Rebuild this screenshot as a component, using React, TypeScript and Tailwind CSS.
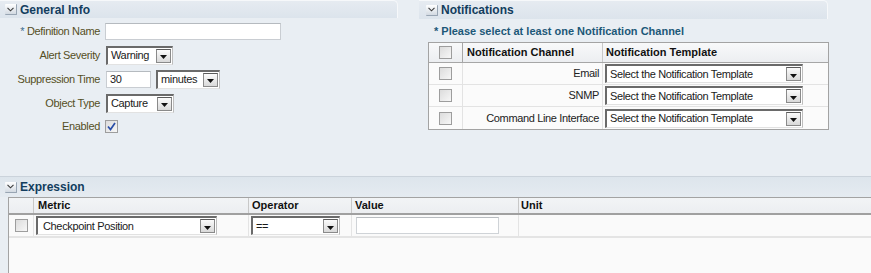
import React from 'react';

const Disclose = () => (
  <span className="flex items-center justify-center w-[12px] h-[11px] bg-linear-to-b from-white to-[#d3dae2] border-b border-r border-[#98a5b3] rounded-[1px]">
    <svg width="7" height="5" viewBox="0 0 7 5">
      <path d="M0.5 0.8 L3.5 3.8 L6.5 0.8" fill="none" stroke="#3b3b3b" strokeWidth="1.1" />
    </svg>
  </span>
);

const DropBtn = () => (
  <span className="flex items-center justify-center w-[15px] h-[14px] mr-[1px] border border-[#8a8a8a] border-t-[#5a5a5a] bg-linear-to-b from-[#fbfbfb] to-[#d9d9d9]">
    <svg width="7" height="4" viewBox="0 0 7 4" className="mt-[3px]">
      <polygon points="0,0 7,0 3.5,4" fill="#111" />
    </svg>
  </span>
);

const Select = ({ text, className }: { text: string; className: string }) => (
  <div
    className={
      'flex items-center justify-between h-[19px] bg-white border-t-2 border-l-2 border-[#6a6a6a] border-r border-b border-r-[#bdbdbd] border-b-[#e2e2e2] ' +
      className
    }
  >
    <span className="pl-[3px] text-[#1a1a1a] whitespace-nowrap">{text}</span>
    <DropBtn />
  </div>
);

const Check = ({ checked }: { checked?: boolean }) => (
  <span className="flex items-center justify-center w-[13px] h-[13px] border border-[#9d9d9d] bg-linear-to-br from-[#dcdcdc] to-[#f7f7f7]">
    {checked && (
      <svg width="9" height="9" viewBox="0 0 9 9">
        <path d="M1 4.5 L3.5 7.5 L8 1" fill="none" stroke="#2a4fa8" strokeWidth="1.7" />
      </svg>
    )}
  </span>
);

const Label = ({ children }: { children: React.ReactNode }) => (
  <div className="w-[101px] pr-[1px] text-right text-[#554e24] whitespace-nowrap">{children}</div>
);

const App = () => {
  const channels = ['Email', 'SNMP', 'Command Line Interface'];
  return (
    <div className="w-[871px] h-[273px] overflow-hidden bg-[#e9eef3] font-['Liberation_Sans',Arial,sans-serif] text-[11px] tracking-[-0.35px] leading-none">
      {/* Top area */}
      <div className="flex h-[176px]">
        {/* General Info */}
        <div className="w-[398px]">
          <div className="flex items-center gap-[3px] h-[18px] pl-[5px] bg-linear-to-b from-[#e6ebf1] to-[#dce4ec] border-r border-t border-[#f6f8fa] rounded-tr-[5px]">
            <Disclose />
            <span className="font-bold text-[12px] tracking-normal text-[#123d5e]">General Info</span>
          </div>
          <div className="flex flex-col pt-[1px]">
            <div className="flex items-center h-[24px] gap-[4px]">
              <Label>
                <span className="text-[#3c6c8c]">* </span>Definition Name
              </Label>
              <div className="w-[176px] h-[17px] bg-white border border-[#c9cdd2] border-t-[#b5babf]" />
            </div>
            <div className="flex items-center h-[24px] gap-[5px]">
              <Label>Alert Severity</Label>
              <Select text="Warning" className="w-[67px]" />
            </div>
            <div className="flex items-center h-[24px] gap-[5px]">
              <Label>Suppression Time</Label>
              <div className="flex items-center w-[45px] h-[17px] pl-[3px] bg-white border border-[#c9cdd2] border-t-[#b5babf] text-[#1a1a1a]">
                30
              </div>
              <Select text="minutes" className="w-[64px]" />
            </div>
            <div className="flex items-center h-[24px] gap-[5px]">
              <Label>Object Type</Label>
              <Select text="Capture" className="w-[68px]" />
            </div>
            <div className="flex items-center h-[22px] gap-[4px]">
              <Label>Enabled</Label>
              <Check checked />
            </div>
          </div>
        </div>

        {/* Notifications */}
        <div className="w-[410px] ml-[21px]">
          <div className="flex items-center gap-[3px] h-[19px] pl-[7px] bg-linear-to-b from-[#e6ebf1] to-[#dce4ec] border-r border-t border-[#f6f8fa] rounded-tr-[5px] mr-[1px]">
            <Disclose />
            <span className="font-bold text-[12px] tracking-normal text-[#123d5e]">Notifications</span>
          </div>
          <div className="pl-[15px] pt-[7px] h-[23px] font-bold text-[11px] tracking-normal text-[#1c5878]">
            * Please select at least one Notification Channel
          </div>
          <div className="ml-[9px] w-[401px] border border-[#a3a3a3] bg-[#fbfbfb]">
            <div className="flex h-[20px] border-b border-[#a6a6a6] bg-linear-to-b from-[#f8f9fa] to-[#eceef1] font-bold text-[11px] tracking-normal text-[#111]">
              <div className="flex items-center justify-center w-[34px] border-r border-[#a6a6a6]">
                <Check />
              </div>
              <div className="flex items-center w-[140px] pl-[4px] border-r border-[#c8c8c8]">Notification Channel</div>
              <div className="flex items-center pl-[3px]">Notification Template</div>
            </div>
            {channels.map((c) => (
              <div key={c} className="flex h-[22px] border-b border-[#e3e3e3] last:border-b-0">
                <div className="flex items-center justify-center w-[34px] border-r border-[#e3e3e3]">
                  <Check />
                </div>
                <div className="flex items-center justify-end w-[140px] pr-[3px] border-r border-[#e3e3e3] text-[#222]">
                  {c}
                </div>
                <div className="flex items-center pl-[2px]">
                  <Select text="Select the Notification Template" className="w-[198px]" />
                </div>
              </div>
            ))}
          </div>
        </div>
      </div>

      {/* Expression */}
      <div className="border-t border-[#cbd3db]">
        <div className="flex items-center gap-[3px] h-[20px] pl-[5px] bg-linear-to-b from-[#dde5ec] to-[#e5ebf1]">
          <Disclose />
          <span className="font-bold text-[12px] tracking-normal text-[#123d5e]">Expression</span>
        </div>
        <div className="ml-[8px] h-[80px] border-l border-t border-[#a3a3a3] bg-[#fafafa]">
          <div className="flex h-[17px] border-b-2 border-[#a0a0a0] bg-linear-to-b from-[#f2f4f6] to-[#eceef1] font-bold text-[11px] tracking-normal text-[#111]">
            <div className="w-[25px] border-r border-[#c8c8c8]" />
            <div className="flex items-center w-[215px] pl-[4px] border-r border-[#c8c8c8]">Metric</div>
            <div className="flex items-center w-[103px] pl-[3px] border-r border-[#c8c8c8]">Operator</div>
            <div className="flex items-center w-[167px] pl-[3px] border-r border-[#c8c8c8]">Value</div>
            <div className="flex items-center pl-[2px]">Unit</div>
          </div>
          <div className="flex h-[23px] border-b-2 border-[#e4e4e4]">
            <div className="flex items-center justify-center w-[25px] border-r border-[#e4e4e4]">
              <Check />
            </div>
            <div className="flex items-center w-[215px] pl-[2px] border-r border-[#e4e4e4]">
              <Select text="Checkpoint Position" className="w-[181px] [&>span:first-child]:pl-[5px]" />
            </div>
            <div className="flex items-center w-[103px] pl-[2px] border-r border-[#e4e4e4]">
              <Select text="==" className="w-[89px]" />
            </div>
            <div className="flex items-center w-[167px] pl-[4px] border-r border-[#e4e4e4]">
              <div className="w-[143px] h-[17px] bg-white border border-[#cfd3d7] border-t-[#b9bdc1]" />
            </div>
            <div className="flex-1" />
          </div>
        </div>
      </div>
    </div>
  );
};

export default App;
